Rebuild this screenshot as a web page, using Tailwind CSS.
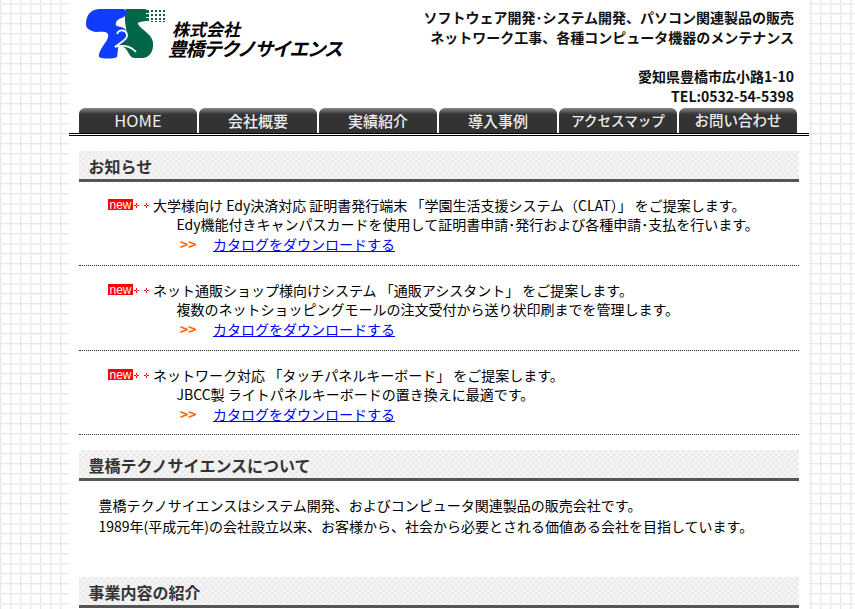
<!DOCTYPE html>
<html lang="ja">
<head>
<meta charset="UTF-8">
<meta name="viewport" content="width=device-width,initial-scale=1.0">
<title>豊橋テクノサイエンス</title>
<script src="https://cdn.jsdelivr.net/npm/@tailwindcss/browser@4"></script>
</head>
<body class="h-[609px] overflow-hidden bg-white bg-[linear-gradient(#e8e8e8_1px,#f4f4f4_1px,#f4f4f4_2px,transparent_2px),linear-gradient(90deg,#e8e8e8_1px,#f4f4f4_1px,#f4f4f4_2px,transparent_2px)] bg-[size:10px_10px] bg-[position:0_3px] font-['Noto_Sans_CJK_JP','Noto_Sans',sans-serif] text-sm text-black">
<div class="ml-[69px] h-[609px] w-[740px] overflow-hidden bg-white">

    <!-- header -->
    <div class="flex h-[107px] justify-between">
        <div class="flex pl-[17px] pt-[9px]">
            <!-- logo -->
            <svg class="h-[50px] w-[80px]" viewBox="0 0 80 50">
                <path fill="#00664a" d="M40 0H60V12C55 13 51 13 52 15C54 20 65 24 67 33C68 43 63 49 56 49H49C44 49 43 44 40 40C38 37 34 37 28 38L30 26L42 26C39 18 38 8 40 0Z"/>
                <path fill="#0f3cff" d="M0 15C0 5 6 0 14 0H37C41 0 42 4 39 7C36 10 31 9 30 14C29 17 31 17 35 18C40 19 43 24 42 28C41 32 35 34 33 37C31 41 32 46 31 48C27 50 17 50 13 48C12 43 18 36 21 31C23 27 23 24 19 23C14 22 10 24 6 22C2 20 0 19 0 15Z"/>
                <path fill="none" stroke="#fff" stroke-width="1.8" d="M31 25C33 20 41 20 41 27C41 31 33 34 29 38C35 36 44 36 50 43"/>
                <path fill="#00664a" d="M60 1h3v3h-3zM65 1h2v2h-2zM69 1h2v2h-2zM73 1h2v2h-2zM77 1h2v2h-2zM60 5h3v3h-3zM65 5h2v2h-2zM69 5h2v2h-2zM73 5h2v2h-2zM77 5h2v2h-2zM60 9h3v3h-3zM65 9h2v2h-2zM69 9h2v2h-2zM73 9h2v2h-2zM77 9h2v2h-2zM65 12h2v1h-2zM69 12h2v1h-2zM73 12h2v1h-2zM77 12h2v1h-2z"/>
            </svg>
            <div class="ml-[2px] mt-[11px] font-bold italic leading-none">
                <p class="pl-[4px] text-[17px]">株式会社</p>
                <p class="mt-[1px] text-[19px] tracking-[-1.5px]">豊橋テクノサイエンス</p>
            </div>
        </div>
        <div class="pr-[15px] pt-[7px] text-right font-bold leading-5 text-[#111]">
            <p>ソフトウェア開発･システム開発、パソコン関連製品の販売</p>
            <p>ネットワーク工事、各種コンピュータ機器のメンテナンス</p>
            <p class="mt-[19px]">愛知県豊橋市広小路1-10</p>
            <p>TEL:0532-54-5398</p>
        </div>
    </div>

    <!-- nav -->
    <div class="flex h-[26px] gap-[2px] pl-[10px] pt-px">
        <a class="flex h-[25px] w-[118px] items-center justify-center rounded-t-[6px] bg-[#333] bg-[linear-gradient(#888_0,#444_5px,#333_7px)] text-[16.5px] leading-none text-[#eee]">HOME</a>
        <a class="flex h-[25px] w-[118px] items-center justify-center rounded-t-[6px] bg-[#333] bg-[linear-gradient(#888_0,#444_5px,#333_7px)] text-[15px] font-medium leading-none text-[#eee]">会社概要</a>
        <a class="flex h-[25px] w-[118px] items-center justify-center rounded-t-[6px] bg-[#333] bg-[linear-gradient(#888_0,#444_5px,#333_7px)] text-[15px] font-medium leading-none text-[#eee]">実績紹介</a>
        <a class="flex h-[25px] w-[118px] items-center justify-center rounded-t-[6px] bg-[#333] bg-[linear-gradient(#888_0,#444_5px,#333_7px)] text-[15px] font-medium leading-none text-[#eee]">導入事例</a>
        <a class="flex h-[25px] w-[118px] items-center justify-center rounded-t-[6px] bg-[#333] bg-[linear-gradient(#888_0,#444_5px,#333_7px)] text-[13.5px] font-medium leading-none text-[#eee]">アクセスマップ</a>
        <a class="flex h-[25px] w-[118px] items-center justify-center rounded-t-[6px] bg-[#333] bg-[linear-gradient(#888_0,#444_5px,#333_7px)] text-[14.5px] font-medium leading-none text-[#eee]">お問い合わせ</a>
    </div>
    <div class="h-[3px] border-y border-black"></div>

    <!-- content -->
    <div class="px-[10px] pt-[15px]">
        <h2 class="flex h-[31px] items-center border-b-[3px] border-[#555] bg-[#f0f0f0] bg-[repeating-conic-gradient(#ececec_0_25%,#f4f4f4_0_50%)] bg-[size:6px_6px] pl-[9.5px] pt-[1px] text-base font-bold leading-none text-[#333]">お知らせ</h2>

        <div class="h-[84px] border-b border-dotted border-[#333] pl-[29px] pt-[14px] leading-[19px]">
            <p class="flex items-center">
                <span class="mb-[2px] flex h-[11px] w-[25px] items-center justify-center bg-[#f00] font-['Liberation_Sans'] text-[12px] leading-none text-white">new</span>
                <svg class="ml-px h-[5px] w-[5px]" viewBox="0 0 5 5"><path fill="none" stroke="#f00" d="M2.5 0v2M2.5 3v2M0 2.5h2M3 2.5h2"/></svg>
                <svg class="ml-[5px] h-[5px] w-[5px]" viewBox="0 0 5 5"><path fill="none" stroke="#f00" d="M2.5 0v2M2.5 3v2M0 2.5h2M3 2.5h2"/></svg>
                <span class="ml-[4px]">大学様向け Edy決済対応 証明書発行端末 「学園生活支援システム（CLAT）」 をご提案します。</span>
            </p>
            <p class="pl-[68.5px]">Edy機能付きキャンパスカードを使用して証明書申請･発行および各種申請･支払を行います。</p>
            <p class="mt-px pl-[72px]"><span class="inline-block w-[33px] font-bold text-[#f60]">&gt;&gt;</span><a class="text-[#00f] underline">カタログをダウンロードする</a></p>
        </div>

        <div class="h-[85px] border-b border-dotted border-[#333] pl-[29px] pt-[15px] leading-[19px]">
            <p class="flex items-center">
                <span class="mb-[2px] flex h-[11px] w-[25px] items-center justify-center bg-[#f00] font-['Liberation_Sans'] text-[12px] leading-none text-white">new</span>
                <svg class="ml-px h-[5px] w-[5px]" viewBox="0 0 5 5"><path fill="none" stroke="#f00" d="M2.5 0v2M2.5 3v2M0 2.5h2M3 2.5h2"/></svg>
                <svg class="ml-[5px] h-[5px] w-[5px]" viewBox="0 0 5 5"><path fill="none" stroke="#f00" d="M2.5 0v2M2.5 3v2M0 2.5h2M3 2.5h2"/></svg>
                <span class="ml-[4px]">ネット通販ショップ様向けシステム 「通販アシスタント」 をご提案します。</span>
            </p>
            <p class="pl-[68.5px]">複数のネットショッピングモールの注文受付から送り状印刷までを管理します。</p>
            <p class="mt-px pl-[72px]"><span class="inline-block w-[33px] font-bold text-[#f60]">&gt;&gt;</span><a class="text-[#00f] underline">カタログをダウンロードする</a></p>
        </div>

        <div class="h-[84px] border-b border-dotted border-[#333] pl-[29px] pt-[15px] leading-[19px]">
            <p class="flex items-center">
                <span class="mb-[2px] flex h-[11px] w-[25px] items-center justify-center bg-[#f00] font-['Liberation_Sans'] text-[12px] leading-none text-white">new</span>
                <svg class="ml-px h-[5px] w-[5px]" viewBox="0 0 5 5"><path fill="none" stroke="#f00" d="M2.5 0v2M2.5 3v2M0 2.5h2M3 2.5h2"/></svg>
                <svg class="ml-[5px] h-[5px] w-[5px]" viewBox="0 0 5 5"><path fill="none" stroke="#f00" d="M2.5 0v2M2.5 3v2M0 2.5h2M3 2.5h2"/></svg>
                <span class="ml-[4px]">ネットワーク対応 「タッチパネルキーボード」 をご提案します。</span>
            </p>
            <p class="pl-[68.5px]">JBCC製 ライトパネルキーボードの置き換えに最適です。</p>
            <p class="mt-px pl-[72px]"><span class="inline-block w-[33px] font-bold text-[#f60]">&gt;&gt;</span><a class="text-[#00f] underline">カタログをダウンロードする</a></p>
        </div>

        <h2 class="mt-[15px] flex h-[31px] items-center border-b-[3px] border-[#555] bg-[#f0f0f0] bg-[repeating-conic-gradient(#ececec_0_25%,#f4f4f4_0_50%)] bg-[size:6px_6px] pl-[9.5px] pt-[1px] text-base font-bold leading-none text-[#333]">豊橋テクノサイエンスについて</h2>

        <div class="h-[96px] pl-[19.5px] pt-[14px] leading-[21px]">
            <p>豊橋テクノサイエンスはシステム開発、およびコンピュータ関連製品の販売会社です。</p>
            <p>1989年(平成元年)の会社設立以来、お客様から、社会から必要とされる価値ある会社を目指しています。</p>
        </div>

        <h2 class="flex h-[31px] items-center border-b-[3px] border-[#555] bg-[#f0f0f0] bg-[repeating-conic-gradient(#ececec_0_25%,#f4f4f4_0_50%)] bg-[size:6px_6px] pl-[9.5px] pt-[1px] text-base font-bold leading-none text-[#333]">事業内容の紹介</h2>
    </div>
</div>
</body>
</html>
